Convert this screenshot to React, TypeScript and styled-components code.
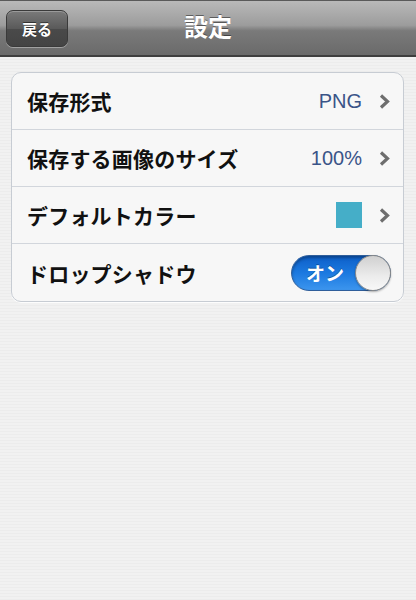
import React from "react";
import styled, { createGlobalStyle } from "styled-components";

const Global = createGlobalStyle`
  html, body { margin: 0; padding: 0; }
  body {
    width: 416px;
    height: 600px;
    overflow: hidden;
    font-family: "Liberation Sans", "Noto Sans CJK JP", sans-serif;
    background: #efefef;
  }
`;

const Screen = styled.div`
  width: 416px;
  height: 600px;
  display: flex;
  flex-direction: column;
  background-color: #efefef;
  background-image: repeating-linear-gradient(
    180deg,
    #f1f1f1 0px,
    #f1f1f1 2px,
    #ececec 2px,
    #ececec 3px
  );
`;

const NavBar = styled.div`
  position: relative;
  height: 57px;
  box-sizing: border-box;
  display: flex;
  align-items: center;
  justify-content: center;
  background: linear-gradient(180deg, #b9b9b9 0%, #9c9c9c 45%, #7a7a7a 55%, #6a6a6a 100%);
  border-top: 1px solid #5a5a5a;
  border-bottom: 2px solid #3e3e3e;
`;

const BackButton = styled.button`
  position: absolute;
  left: 6px;
  top: 9px;
  width: 62px;
  height: 37px;
  box-sizing: border-box;
  border-radius: 7px;
  border: 1px solid #3a3a3a;
  background: linear-gradient(180deg, #7a7a7a 0%, #5a5a5a 50%, #4a4a4a 51%, #444 100%);
  box-shadow: 0 1px 0 rgba(255, 255, 255, 0.35), inset 0 1px 0 rgba(255, 255, 255, 0.25);
  color: #fff;
  font-family: "Noto Sans CJK JP", sans-serif;
  font-weight: 700;
  font-size: 15px;
  padding: 0;
  display: flex;
  align-items: center;
  justify-content: center;
  text-shadow: 0 -1px 0 rgba(0, 0, 0, 0.5);
`;

const Title = styled.h1`
  margin: 0;
  color: #fff;
  font-family: "Noto Sans CJK JP", sans-serif;
  font-weight: 700;
  font-size: 24px;
  line-height: 1;
  text-shadow: 0 -1px 0 rgba(0, 0, 0, 0.45);
  transform: translateY(-2px);
`;

const Content = styled.div`
  padding: 15px 12px 0 11px;
`;

const Group = styled.div`
  border: 1px solid #c7ccd3;
  border-radius: 10px;
  background: #f7f7f7;
  overflow: hidden;
  box-shadow: 0 1px 0 rgba(255, 255, 255, 0.9);
`;

const Row = styled.div<{ $last?: boolean }>`
  height: 57px;
  box-sizing: border-box;
  display: flex;
  align-items: center;
  padding: 0 13px 0 15px;
  border-bottom: ${(p) => (p.$last ? "none" : "1px solid #d2d6dc")};
`;

const Label = styled.span`
  flex: 1;
  font-family: "Noto Sans CJK JP", sans-serif;
  font-weight: 700;
  font-size: 21px;
  color: #111;
  letter-spacing: 0.2px;
`;

const Value = styled.span`
  font-family: "Liberation Sans", "Noto Sans CJK JP", sans-serif;
  font-size: 20px;
  color: #3a5488;
`;

const Swatch = styled.span<{ $color: string }>`
  width: 26px;
  height: 26px;
  background: ${(p) => p.$color};
`;

const ChevronBox = styled.span`
  width: 12px;
  height: 16px;
  margin-left: 16px;
  display: flex;
  align-items: center;
  justify-content: center;
`;

const Chevron = () => (
  <ChevronBox>
    <svg width="11" height="15" viewBox="0 0 11 15">
      <path d="M2 1.5 L8.5 7.5 L2 13.5" fill="none" stroke="#6e6e6e" strokeWidth="3.2" />
    </svg>
  </ChevronBox>
);

const Switch = styled.div`
  position: relative;
  width: 100px;
  height: 36px;
  box-sizing: border-box;
  border-radius: 18px;
  border: 1px solid #2f5e9a;
  background: linear-gradient(180deg, #0d5fc8 0%, #1b79e0 50%, #3c95ee 100%);
  box-shadow: inset 0 2px 3px rgba(0, 0, 0, 0.3);
  display: flex;
  align-items: center;
  margin-right: -1px;
`;

const SwitchText = styled.span`
  color: #fff;
  font-family: "Noto Sans CJK JP", sans-serif;
  font-weight: 700;
  font-size: 19px;
  margin-left: 14px;
  text-shadow: 0 -1px 0 rgba(0, 0, 0, 0.3);
`;

const Knob = styled.span`
  position: absolute;
  right: -1px;
  top: -1px;
  width: 36px;
  height: 36px;
  box-sizing: border-box;
  border-radius: 50%;
  border: 1px solid #8a8a8a;
  background: linear-gradient(180deg, #d0d0d0 0%, #ececec 60%, #f8f8f8 100%);
  box-shadow: 0 1px 2px rgba(0, 0, 0, 0.3);
`;

export default function App() {
  return (
    <Screen>
      <Global />
      <NavBar>
        <BackButton>戻る</BackButton>
        <Title>設定</Title>
      </NavBar>
      <Content>
        <Group>
          <Row>
            <Label>保存形式</Label>
            <Value>PNG</Value>
            <Chevron />
          </Row>
          <Row>
            <Label>保存する画像のサイズ</Label>
            <Value>100%</Value>
            <Chevron />
          </Row>
          <Row>
            <Label>デフォルトカラー</Label>
            <Swatch $color="#45aec8" />
            <Chevron />
          </Row>
          <Row $last>
            <Label>ドロップシャドウ</Label>
            <Switch>
              <SwitchText>オン</SwitchText>
              <Knob />
            </Switch>
          </Row>
        </Group>
      </Content>
    </Screen>
  );
}
